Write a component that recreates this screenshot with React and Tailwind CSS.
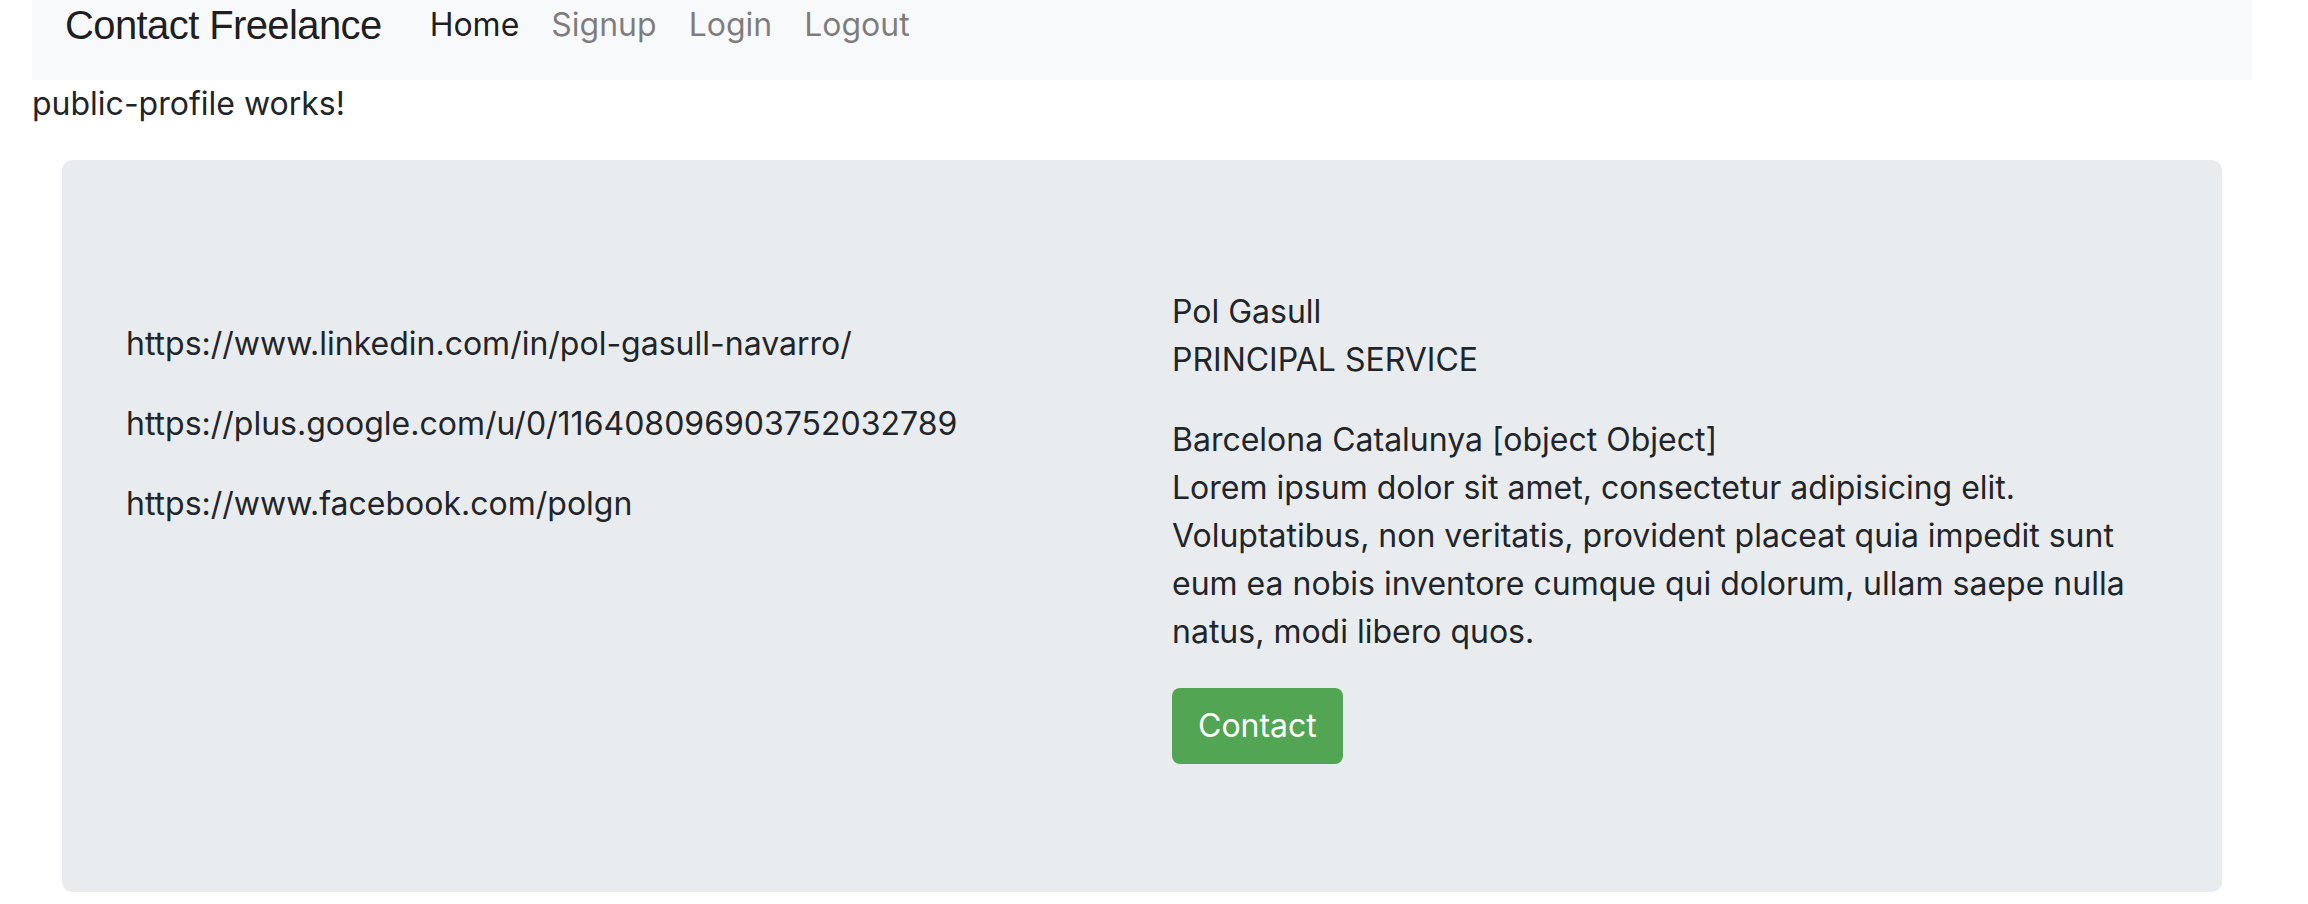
export default function App() {
  const links = [
    'https://www.linkedin.com/in/pol-gasull-navarro/',
    'https://plus.google.com/u/0/116408096903752032789',
    'https://www.facebook.com/polgn',
  ];

  return (
    <div className="min-h-screen bg-white text-[#212529] font-['Inter','Liberation_Sans',sans-serif]">
      <div className="w-[2220px] ml-[32px]">
        {/* navbar */}
        <nav className="h-[80px] bg-[#f8f9fa] px-[33px] pt-[1px] flex items-start">
          <a className="text-[40px] leading-[48px] tracking-[-0.6px] text-black/90 mr-[32px] font-['Liberation_Sans',sans-serif]">
            Contact Freelance
          </a>
          <ul className="flex">
            <li className="px-[16px] text-[32px] leading-[48px] text-black/90">Home</li>
            <li className="px-[16px] text-[32px] leading-[48px] text-black/50">Signup</li>
            <li className="px-[16px] text-[32px] leading-[48px] text-black/50">Login</li>
            <li className="px-[16px] text-[32px] leading-[48px] text-black/50">Logout</li>
          </ul>
        </nav>

        <p className="text-[32px] leading-[48px] mb-[32px]">public-profile works!</p>

        {/* jumbotron */}
        <div className="mx-[30px] bg-[#e9ecef] rounded-[10px] px-[64px] py-[128px]">
          <div className="grid grid-cols-2 gap-x-[60px] text-[32px] leading-[48px]">
            <div className="pt-[32px]">
              {links.map((l) => (
                <p key={l} className="mb-[32px]">{l}</p>
              ))}
            </div>
            <div>
              <p className="mb-[32px]">
                Pol Gasull
                <br />
                PRINCIPAL SERVICE
              </p>
              <p className="mb-[32px]">
                Barcelona Catalunya [object Object]
                <br />
                Lorem ipsum dolor sit amet, consectetur adipisicing elit. Voluptatibus, non veritatis, provident placeat quia impedit sunt eum ea nobis inventore cumque qui dolorum, ullam saepe nulla natus, modi libero quos.
              </p>
              <button className="bg-[#52a552] text-white text-[32px] leading-[48px] px-[24px] py-[12px] border-2 border-transparent rounded-[8px]">
                Contact
              </button>
            </div>
          </div>
        </div>
      </div>
    </div>
  );
}
